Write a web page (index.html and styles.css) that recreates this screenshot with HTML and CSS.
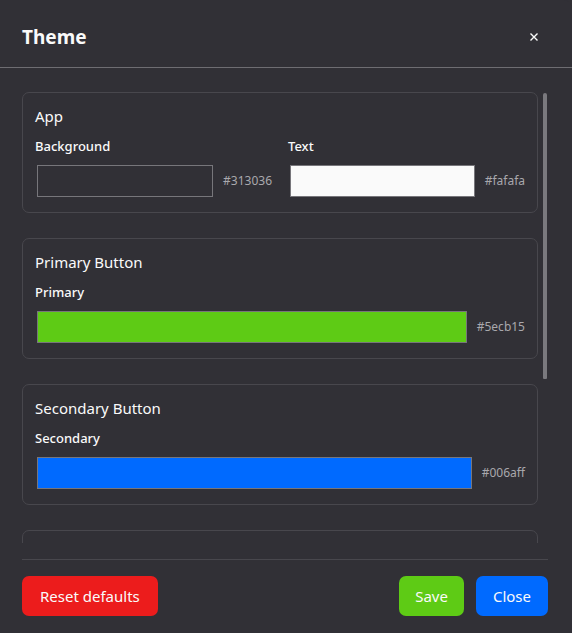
FILE: index.html
```html
<!DOCTYPE html>
<html>
<head>
<meta charset="utf-8">
<link rel="stylesheet" href="styles.css">
</head>
<body>
<div class="modal">
  <header class="modal-header">
    <h1 class="modal-title">Theme</h1>
    <button class="close-x" aria-label="Close">
      <svg width="8" height="8" viewBox="0 0 8 8"><path d="M0.5 0.5L7.5 7.5M7.5 0.5L0.5 7.5" stroke="#fafafa" stroke-width="1.4" fill="none"/></svg>
    </button>
  </header>
  <div class="body-wrap">
    <div class="modal-body">
      <section class="card">
        <h2 class="card-title">App</h2>
        <div class="fields two">
          <div class="field">
            <label class="field-label">Background</label>
            <div class="color-row">
              <div class="swatch" style="background:#313036"></div>
              <span class="hex">#313036</span>
            </div>
          </div>
          <div class="field">
            <label class="field-label">Text</label>
            <div class="color-row">
              <div class="swatch" style="background:#fafafa"></div>
              <span class="hex">#fafafa</span>
            </div>
          </div>
        </div>
      </section>
      <section class="card">
        <h2 class="card-title">Primary Button</h2>
        <div class="fields">
          <div class="field">
            <label class="field-label">Primary</label>
            <div class="color-row">
              <div class="swatch" style="background:#5ecb15"></div>
              <span class="hex">#5ecb15</span>
            </div>
          </div>
        </div>
      </section>
      <section class="card">
        <h2 class="card-title">Secondary Button</h2>
        <div class="fields">
          <div class="field">
            <label class="field-label">Secondary</label>
            <div class="color-row">
              <div class="swatch" style="background:#006aff"></div>
              <span class="hex">#006aff</span>
            </div>
          </div>
        </div>
      </section>
      <section class="card">
        <h2 class="card-title">Danger Button</h2>
        <div class="fields">
          <div class="field">
            <label class="field-label">Danger</label>
            <div class="color-row">
              <div class="swatch" style="background:#ec1c1c"></div>
              <span class="hex">#ec1c1c</span>
            </div>
          </div>
        </div>
      </section>
    </div>
    <div class="scrollbar"><div class="thumb"></div></div>
  </div>
  <footer class="modal-footer">
    <button class="btn btn-red">Reset defaults</button>
    <div class="footer-right">
      <button class="btn btn-green">Save</button>
      <button class="btn btn-blue">Close</button>
    </div>
  </footer>
</div>
</body>
</html>
```
FILE: styles.css
```css
* { box-sizing: border-box; }
html, body {
  margin: 0;
  padding: 0;
  height: 100%;
  background: #313036;
}
body {
  font-family: "Noto Sans", "DejaVu Sans", sans-serif;
  color: #fafafa;
}
.modal {
  height: 633px;
  display: flex;
  flex-direction: column;
  background: #313036;
  border-top-right-radius: 8px;
  overflow: hidden;
}
.modal-header {
  display: flex;
  align-items: center;
  justify-content: space-between;
  padding: 23px 22px 16px 22px;
  border-bottom: 1px solid #6e6d72;
}
.modal-title {
  margin: 0;
  font-size: 19px;
  line-height: 28px;
  font-weight: 700;
}
.close-x {
  background: none;
  border: 0;
  padding: 0;
  margin-right: 12px;
  width: 8px;
  height: 8px;
  display: flex;
  cursor: pointer;
}
.body-wrap {
  flex: 1;
  min-height: 0;
  margin: 0 24px 0 22px;
  display: flex;
}
.modal-body {
  flex: 1;
  min-width: 0;
  padding-top: 24px;
  overflow: hidden;
  display: flex;
  flex-direction: column;
  gap: 25px;
}
.scrollbar {
  width: 10px;
  flex: none;
  padding: 25px 1px 0 5px;
}
.thumb {
  height: 286px;
  background: #7a797e;
  border-radius: 2px 2px 1px 1px;
}
.card {
  flex: none;
  border: 1px solid #48474d;
  border-radius: 7px;
  padding: 11px 12px 15px 12px;
}
.card-title {
  margin: 0;
  font-size: 15px;
  line-height: 24px;
  font-weight: 400;
}
.fields {
  display: grid;
  grid-template-columns: 1fr;
  column-gap: 16px;
  margin-top: 8px;
}
.fields.two {
  grid-template-columns: 1fr 1fr;
}
.field-label {
  display: block;
  font-size: 13px;
  line-height: 20px;
  font-weight: 500;
}
.color-row {
  display: flex;
  align-items: center;
  gap: 10px;
  margin-top: 9px;
}
.swatch {
  flex: 1;
  height: 32px;
  margin-left: 2px;
  border: 1px solid #77767b;
}
.hex {
  font-size: 12px;
  color: #a9a8ad;
  line-height: 16px;
}
.modal-footer {
  margin: 16px 24px 0 22px;
  padding: 16px 0 17px 0;
  border-top: 1px solid #48474d;
  display: flex;
  justify-content: space-between;
  align-items: center;
}
.footer-right {
  display: flex;
  gap: 12px;
}
.btn {
  height: 40px;
  border: 0;
  border-radius: 7px;
  padding: 0 17px;
  font-family: "Noto Sans", "DejaVu Sans", sans-serif;
  font-size: 15px;
  color: #fafafa;
  cursor: pointer;
}
.btn-red { background: #ec1c1c; padding: 0 18px; }
.btn-green { background: #5ecb15; padding: 0 16px; }
.btn-blue { background: #006aff; }
```
